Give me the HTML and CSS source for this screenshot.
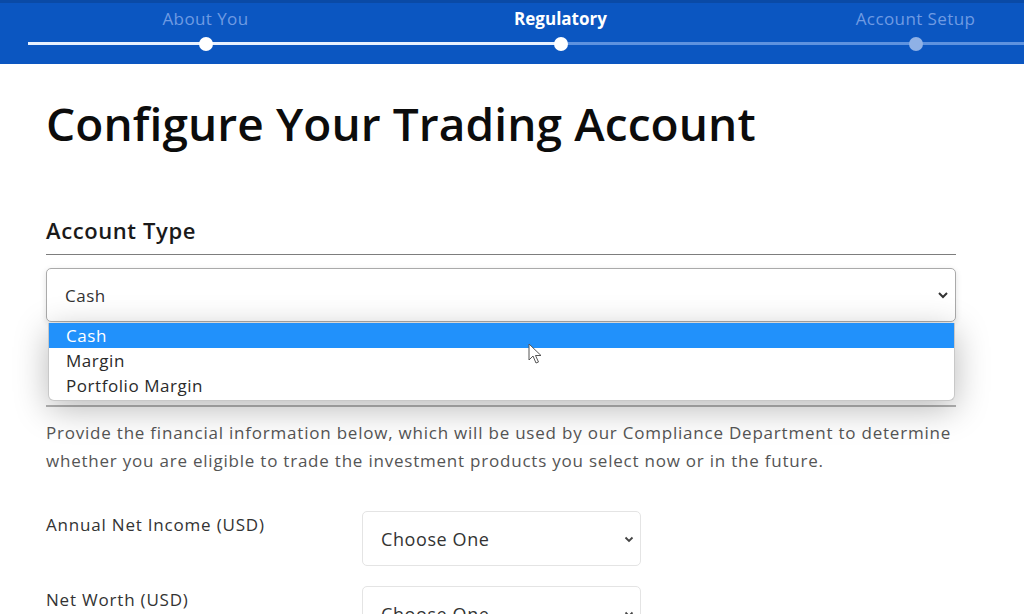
FILE: index.html
```html
<!DOCTYPE html>
<html>
<head>
<meta charset="utf-8">
<link rel="stylesheet" href="styles.css">
</head>
<body>
<header class="steps">
  <div class="step done">
    <span class="step-label">About You</span>
    <span class="track"><span class="dot"></span></span>
  </div>
  <div class="step current">
    <span class="step-label">Regulatory</span>
    <span class="track"><span class="dot"></span></span>
  </div>
  <div class="step todo">
    <span class="step-label">Account Setup</span>
    <span class="track"><span class="dot"></span></span>
  </div>
</header>

<main class="page">
  <h1 class="title">Configure Your Trading Account</h1>

  <section class="section">
    <h2 class="section-title">Account Type</h2>
    <div class="select-wrap">
      <div class="select big">
        <span>Cash</span>
        <svg class="chev" width="12" height="8" viewBox="0 0 12 8"><path d="M2 2 L6 6 L10 2" fill="none" stroke="#333" stroke-width="2"/></svg>
      </div>
      <ul class="options">
        <li class="opt active">Cash</li>
        <li class="opt">Margin</li>
        <li class="opt">Portfolio Margin</li>
      </ul>
      <svg class="cursor" width="16" height="24" viewBox="0 0 16 24"><path d="M1 1 L1 17 L5 13 L8 20 L10.5 19 L7.5 12.5 L13 12.5 Z" fill="#fff" stroke="#555" stroke-width="1"/></svg>
    </div>
    <div class="rule2"></div>
  </section>

  <p class="intro">Provide the financial information below, which will be used by our Compliance Department to determine whether you are eligible to trade the investment products you select now or in the future.</p>

  <div class="fields">
    <div class="field">
      <label class="field-label">Annual Net Income (USD)</label>
      <div class="select small">
        <span>Choose One</span>
        <svg class="chev" width="12" height="8" viewBox="0 0 12 8"><path d="M2.5 2.5 L6 6 L9.5 2.5" fill="none" stroke="#444" stroke-width="1.8"/></svg>
      </div>
    </div>
    <div class="field">
      <label class="field-label">Net Worth (USD)</label>
      <div class="select small">
        <span>Choose One</span>
        <svg class="chev" width="12" height="8" viewBox="0 0 12 8"><path d="M2.5 2.5 L6 6 L9.5 2.5" fill="none" stroke="#444" stroke-width="1.8"/></svg>
      </div>
    </div>
  </div>
</main>
</body>
</html>
```
FILE: styles.css
```css
* { box-sizing: border-box; }
html, body { margin: 0; padding: 0; }
body {
  width: 1024px;
  height: 614px;
  overflow: hidden;
  background: #fff;
  font-family: "Open Sans", Lato, sans-serif;
  color: #111;
}
.steps {
  height: 64px;
  background: #0b56c1;
  border-top: 3px solid #0a4aa6;
  display: grid;
  grid-template-columns: 355px 355px 355px;
  padding-left: 28px;
  width: 1120px;
}
.step {
  display: flex;
  flex-direction: column;
  align-items: center;
}
.step-label {
  font-size: 17px;
  line-height: 20px;
  margin-top: 6px;
  color: #6f9be3;
  letter-spacing: 0.4px;
}
.current .step-label { color: #fff; font-weight: 700; letter-spacing: 0; }
.track {
  margin-top: 13px;
  width: 100%;
  height: 3px;
  background: #e8f1ff;
  display: flex;
  justify-content: center;
  align-items: center;
}
.todo .track { background: #5e92df; }
.current .track { background: linear-gradient(to right, #e8f1ff 0 50%, #5e92df 50% 100%); }
.dot {
  width: 14px;
  height: 14px;
  border-radius: 50%;
  background: #fff;
  flex: none;
}
.todo .dot { background: #8fb1e6; }

.page { padding: 0 64px 0 46px; }
.title {
  margin: 31px 0 0;
  font-size: 46px;
  line-height: 56px;
  font-weight: 600;
  letter-spacing: 0.1px;
  color: #0c0c0c;
}
.section { margin-top: 64px; margin-right: 4px; }
.section-title {
  margin: 0;
  font-size: 22px;
  line-height: 30px;
  font-weight: 600;
  letter-spacing: 0.6px;
  color: #1a1a1a;
  padding-bottom: 9px;
  border-bottom: 1.5px solid #7d7d7d;
}
.select-wrap { position: relative; margin-top: 13px; }
.select {
  display: flex;
  align-items: center;
  justify-content: space-between;
  border: 1px solid #c9c9c9;
  border-radius: 5px;
  background: #fff;
  color: #333;
}
.select.big {
  height: 54px;
  padding: 0 6px 0 18px;
  font-size: 17px;
  letter-spacing: 0.5px;
  border-color: #aaa;
  box-shadow: 0 2px 6px rgba(0,0,0,0.12);
}
.options {
  position: absolute;
  left: 2px;
  right: 1px;
  top: 55px;
  margin: 0;
  padding: 0 0 2px;
  list-style: none;
  background: #fff;
  border: 1px solid #c8c8c8;
  border-top: none;
  border-radius: 0 0 6px 6px;
  box-shadow: 0 8px 34px rgba(0,0,0,0.28);
  z-index: 2;
}
.opt {
  height: 25px;
  line-height: 25px;
  padding-left: 17px;
  font-size: 17px;
  letter-spacing: 0.55px;
  color: #2a2a2a;
}
.opt.active { background: #2191fb; color: #fff; }
.cursor { position: absolute; left: 482px; top: 75px; z-index: 3; }
.rule2 {
  margin-top: 83px;
  height: 2px;
  background: #b5b5b5;
}
.intro {
  margin: 12px 0 0;
  font-size: 17px;
  line-height: 28px;
  letter-spacing: 0.78px;
  color: #555;
}
.fields {
  margin-top: 36px;
  display: flex;
  flex-direction: column;
  gap: 20px;
}
.field {
  display: flex;
  align-items: flex-start;
}
.field-label {
  width: 316px;
  font-size: 17px;
  line-height: 22px;
  letter-spacing: 0.8px;
  color: #333;
  padding-top: 3px;
}
.select.small {
  width: 279px;
  height: 55px;
  padding: 0 5px 0 18px;
  font-size: 18px;
  letter-spacing: 0.6px;
  border-color: #e4e4e4;
}
```
